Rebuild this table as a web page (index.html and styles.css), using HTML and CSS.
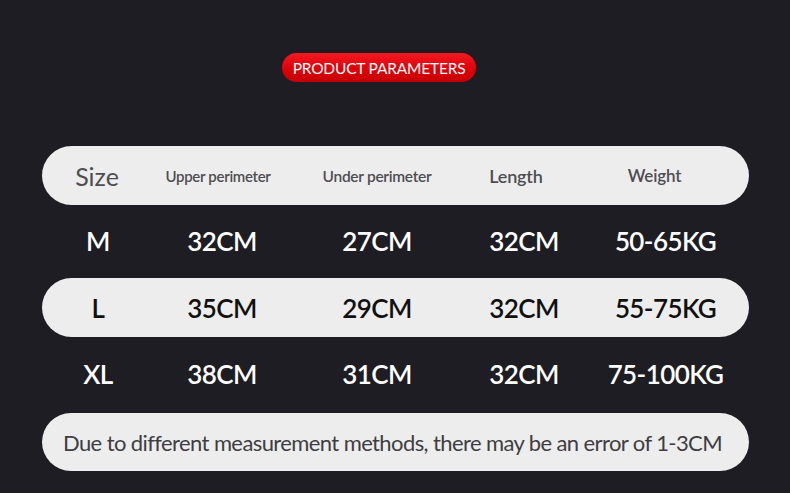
FILE: index.html
```html
<!DOCTYPE html>
<html>
<head>
<meta charset="utf-8">
<link rel="stylesheet" href="styles.css">
</head>
<body>
<div class="page">
  <div class="badge-row"><span class="badge">PRODUCT PARAMETERS</span></div>
  <div class="table">
    <div class="row bar head">
      <span class="c1 h-size">Size</span>
      <span class="c2 h-sm">Upper perimeter</span>
      <span class="c3 h-sm2">Under perimeter</span>
      <span class="c4 h-md">Length</span>
      <span class="c5 h-md2">Weight</span>
    </div>
    <div class="row plain">
      <span class="c1">M</span><span class="c2">32CM</span><span class="c3">27CM</span><span class="c4">32CM</span><span class="c5">50-65KG</span>
    </div>
    <div class="row bar val">
      <span class="c1">L</span><span class="c2">35CM</span><span class="c3">29CM</span><span class="c4">32CM</span><span class="c5">55-75KG</span>
    </div>
    <div class="row plain tall">
      <span class="c1">XL</span><span class="c2">38CM</span><span class="c3">31CM</span><span class="c4">32CM</span><span class="c5">75-100KG</span>
    </div>
    <div class="bar note">Due to different measurement methods, there may be an error of 1-3CM</div>
  </div>
</div>
</body>
</html>
```
FILE: styles.css
```css
html, body {
  margin: 0;
  padding: 0;
  background: #1e1d23;
}
.page {
  width: 790px;
  height: 493px;
  font-family: "Lato", "Open Sans", sans-serif;
  box-sizing: border-box;
  padding-top: 53px;
}
.badge-row {
  display: flex;
  padding-left: 282px;
  height: 29px;
}
.badge {
  width: 194px;
  height: 29px;
  border-radius: 15px;
  background: linear-gradient(180deg, #f31a20 0%, #dc0008 60%, #c40006 100%);
  color: #fff;
  font-size: 15.5px;
  display: flex;
  align-items: center;
  justify-content: center;
  letter-spacing: -0.2px;
}
.table {
  margin-top: 64px;
  margin-left: 42px;
  width: 707px;
}
.row {
  display: grid;
  grid-template-columns: 112px 134px 178px 108px 175px;
  align-items: center;
  text-align: center;
}
.bar {
  background: #ededed;
  border-radius: 30px;
}
.head {
  height: 59px;
  color: #4e4e52;
}
.h-size { font-size: 25px; font-weight: 400; margin-left: -2px; }
.h-sm { font-size: 15px; font-weight: 600; letter-spacing: -0.3px; margin-left: -6px; }
.h-sm2 { font-size: 15.5px; font-weight: 600; letter-spacing: -0.3px; }
.h-md { font-size: 18px; font-weight: 600; letter-spacing: -0.2px; margin-left: -8px; }
.h-md2 { font-size: 17px; font-weight: 600; letter-spacing: -0.2px; margin-left: -14px; }
.plain {
  height: 73px;
  color: #ffffff;
  font-size: 26px;
  font-weight: 600;
  letter-spacing: -0.6px;
  padding-bottom: 2px;
  box-sizing: border-box;
}
.plain.tall { height: 76px; }
.val {
  height: 59px;
  color: #111;
  font-size: 26px;
  font-weight: 600;
  letter-spacing: -0.6px;
}
.row .c2 { padding-left: 2px; }
.row .c4 { padding-left: 8px; }
.row .c5 { padding-left: 8px; }
.head .c2, .head .c4, .head .c5 { padding-left: 0; }
.note {
  height: 58px;
  display: flex;
  align-items: center;
  justify-content: center;
  color: #3e3e42;
  font-size: 22px;
  letter-spacing: -0.6px;
  padding-right: 6px;
}
```
